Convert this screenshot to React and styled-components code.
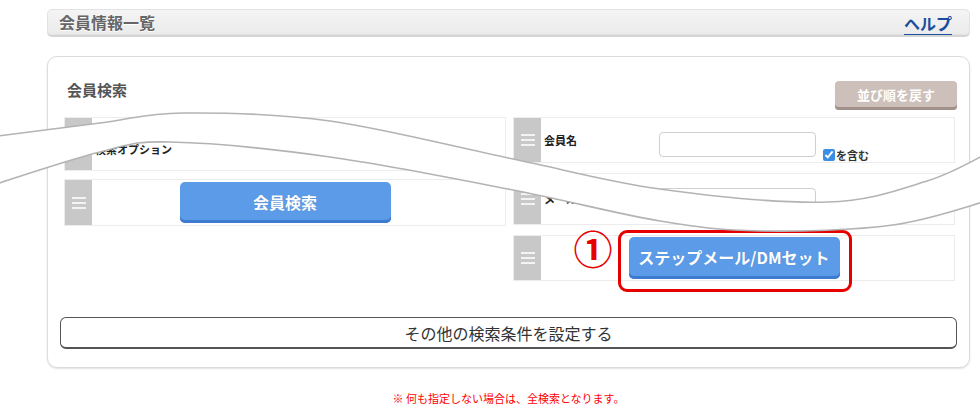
import React from "react";
import styled, { createGlobalStyle } from "styled-components";

const Global = createGlobalStyle`
  html, body { margin: 0; padding: 0; background: #fff; }
  body { font-family: "Noto Sans CJK JP", "Noto Sans", sans-serif; }
  * { box-sizing: border-box; }
`;

const Page = styled.div`
  position: relative;
  width: 980px;
  height: 420px;
  overflow: hidden;
  padding: 9px 10px 0 47px;
`;

const HeaderBar = styled.div`
  display: flex;
  align-items: center;
  justify-content: space-between;
  height: 26px;
  padding: 0 17px 0 11px;
  background: linear-gradient(#f4f4f4, #ebebeb);
  border: 1px solid #e2e2e2;
  border-radius: 5px;
  box-shadow: 0 2px 0 #d4d4d4;
`;

const PageTitle = styled.h1`
  margin: 0;
  font-size: 16px;
  line-height: 1;
  font-weight: 700;
  color: #666;
  text-shadow: 0 1px 0 #fff;
`;

const HelpLink = styled.a`
  font-size: 16px;
  font-weight: 700;
  line-height: 1;
  color: #1b4d9e;
  text-decoration: underline;
  text-underline-offset: 4px;
  margin-top: 2px;
`;

const Panel = styled.section`
  margin-top: 21px;
  border: 1px solid #dcdcdc;
  border-radius: 10px;
  box-shadow: 0 1px 2px rgba(0, 0, 0, 0.12);
  padding: 24px 12px 18px;
  background: #fff;
`;

const PanelHead = styled.div`
  display: flex;
  align-items: flex-start;
  justify-content: space-between;
  height: 29px;
  padding-left: 7px;
`;

const PanelTitle = styled.h2`
  margin: 0;
  font-size: 15px;
  line-height: 18px;
  font-weight: 700;
  color: #555;
`;

const ResetButton = styled.button`
  width: 122px;
  height: 29px;
  border: none;
  border-radius: 4px;
  background: #cdbfba;
  box-shadow: inset 0 -3px 0 #a2918b;
  color: #fff;
  font-family: inherit;
  font-size: 13px;
  font-weight: 700;
  padding: 0 0 2px;
`;

const Grid = styled.div`
  display: grid;
  grid-template-columns: 1fr 1fr;
  gap: 7px;
  align-items: start;
  margin: 7px 2px 0 4px;
`;

const Column = styled.div`
  display: flex;
  flex-direction: column;
  gap: ${(p) => p.$gap}px;
`;

const Row = styled.div`
  display: flex;
  height: ${(p) => p.$h}px;
  border: 1px solid #ececec;
  background: #fff;
`;

const Handle = styled.div`
  flex: none;
  width: 27px;
  background: #c8c8c8;
  display: flex;
  align-items: center;
  justify-content: center;
`;

const Bars = styled.span`
  width: 14px;
  height: 12px;
  background: linear-gradient(
    #f3f3f3 0 2px,
    transparent 2px 5px,
    #f3f3f3 5px 7px,
    transparent 7px 10px,
    #f3f3f3 10px 12px
  );
`;

const Label = styled.div`
  width: 118px;
  padding-left: 3px;
  align-self: center;
  margin-top: ${(p) => p.$shift || 0}px;
  font-size: 11px;
  font-weight: 700;
  color: #222;
  white-space: nowrap;
`;

const TextInput = styled.input`
  align-self: flex-start;
  margin-top: 14px;
  width: 157px;
  height: 25px;
  border: 1px solid #cfcfcf;
  border-radius: 4px;
  background: #fff;
`;

const CheckWrap = styled.label`
  align-self: flex-start;
  display: inline-flex;
  align-items: center;
  margin: 29px 0 0 7px;
  font-size: 11px;
  font-weight: 700;
  color: #333;
`;

const Checkbox = styled.input`
  width: 12px;
  height: 12px;
  margin: 0 1px 0 0;
  accent-color: #3a8ee6;
`;

const ButtonCell = styled.div`
  flex: 1;
  display: flex;
  align-items: center;
  justify-content: center;
  padding-right: 27px;
`;

const BlueButton = styled.button`
  width: 211px;
  height: ${(p) => p.$h}px;
  border: none;
  border-radius: 5px;
  background: #5b9be8;
  box-shadow: inset 0 -3px 0 #3c7bcf;
  color: #fff;
  font-family: inherit;
  font-size: 16px;
  font-weight: 700;
  padding: 0 0 2px;
  text-shadow: 0 0 1px rgba(0, 0, 0, 0.15);
`;

const Highlight = styled.div`
  position: relative;
  display: inline-flex;
`;

const RedFrame = styled.span`
  position: absolute;
  left: -11px;
  right: -12px;
  top: -7px;
  bottom: -13px;
  border: 3px solid #e60000;
  border-radius: 9px;
  pointer-events: none;
`;

const Mark = styled.span`
  position: absolute;
  right: calc(100% + 16px);
  top: -9px;
  color: #e60000;
  font-size: 39px;
  font-weight: 700;
  line-height: 1;
`;

const OtherButton = styled.button`
  display: block;
  width: 100%;
  height: 32px;
  margin-top: 36px;
  border: 1px solid #555;
  border-bottom-width: 2px;
  border-radius: 6px;
  background: #fff;
  color: #333;
  font-family: inherit;
  font-size: 16px;
`;

const Note = styled.p`
  margin: 22px 0 0;
  text-align: center;
  color: #f00;
  font-size: 11px;
  line-height: 16px;
`;

const Band = styled.svg`
  position: absolute;
  top: 0;
  left: 0;
  width: 980px;
  height: 420px;
  pointer-events: none;
`;

function curve(pts) {
  let d = "";
  for (let i = 0; i < pts.length - 1; i++) {
    const p0 = pts[i - 1] || pts[i];
    const p1 = pts[i];
    const p2 = pts[i + 1];
    const p3 = pts[i + 2] || p2;
    const c1 = [p1[0] + (p2[0] - p0[0]) / 6, p1[1] + (p2[1] - p0[1]) / 6];
    const c2 = [p2[0] - (p3[0] - p1[0]) / 6, p2[1] - (p3[1] - p1[1]) / 6];
    d += ` C${c1[0].toFixed(1)},${c1[1].toFixed(1)} ${c2[0].toFixed(1)},${c2[1].toFixed(1)} ${p2[0]},${p2[1]}`;
  }
  return d;
}

const upper = [
  [-10, 137], [100, 123], [183, 113], [330, 121], [513, 159],
  [660, 189], [827, 202], [927, 181], [990, 152],
];
const lower = [
  [-10, 186], [100, 152], [170, 142], [330, 157], [513, 190],
  [660, 221], [760, 231], [893, 225], [990, 200],
];

const upperD = `M${upper[0][0]},${upper[0][1]}` + curve(upper);
const lowerD = `M${lower[0][0]},${lower[0][1]}` + curve(lower);
const lowerRev = [...lower].reverse();
const fillD =
  upperD +
  ` L${lowerRev[0][0]},${lowerRev[0][1]}` +
  curve(lowerRev) +
  " Z";

function WaveBand() {
  return (
    <Band viewBox="0 0 980 420">
      <path d={fillD} fill="#fff" />
      <path d={upperD} fill="none" stroke="#b3b3b3" strokeWidth="1.6" />
      <path d={lowerD} fill="none" stroke="#b3b3b3" strokeWidth="1.6" />
    </Band>
  );
}

function SearchRow({ h, children }) {
  return (
    <Row $h={h}>
      <Handle>
        <Bars />
      </Handle>
      {children}
    </Row>
  );
}

export default function App() {
  return (
    <>
      <Global />
      <Page>
        <HeaderBar>
          <PageTitle>会員情報一覧</PageTitle>
          <HelpLink href="#">ヘルプ</HelpLink>
        </HeaderBar>

        <Panel>
          <PanelHead>
            <PanelTitle>会員検索</PanelTitle>
            <ResetButton type="button">並び順を戻す</ResetButton>
          </PanelHead>

          <Grid>
            <Column $gap={8}>
              <SearchRow h={54}>
                <Label $shift={9}>検索オプション</Label>
              </SearchRow>
              <SearchRow h={47}>
                <ButtonCell>
                  <BlueButton type="button" $h={41}>会員検索</BlueButton>
                </ButtonCell>
              </SearchRow>
            </Column>

            <Column $gap={10}>
              <SearchRow h={46}>
                <Label>会員名</Label>
                <TextInput type="text" />
                <CheckWrap>
                  <Checkbox type="checkbox" defaultChecked />
                  を含む
                </CheckWrap>
              </SearchRow>
              <SearchRow h={52}>
                <Label>メールアドレス</Label>
                <TextInput type="text" />
              </SearchRow>
              <SearchRow h={46}>
                <ButtonCell>
                  <Highlight>
                    <Mark>①</Mark>
                    <BlueButton type="button" $h={42}>ステップメール/DMセット</BlueButton>
                    <RedFrame />
                  </Highlight>
                </ButtonCell>
              </SearchRow>
            </Column>
          </Grid>

          <OtherButton type="button">その他の検索条件を設定する</OtherButton>
        </Panel>

        <Note>※ 何も指定しない場合は、全検索となります。</Note>

        <WaveBand />
      </Page>
    </>
  );
}
